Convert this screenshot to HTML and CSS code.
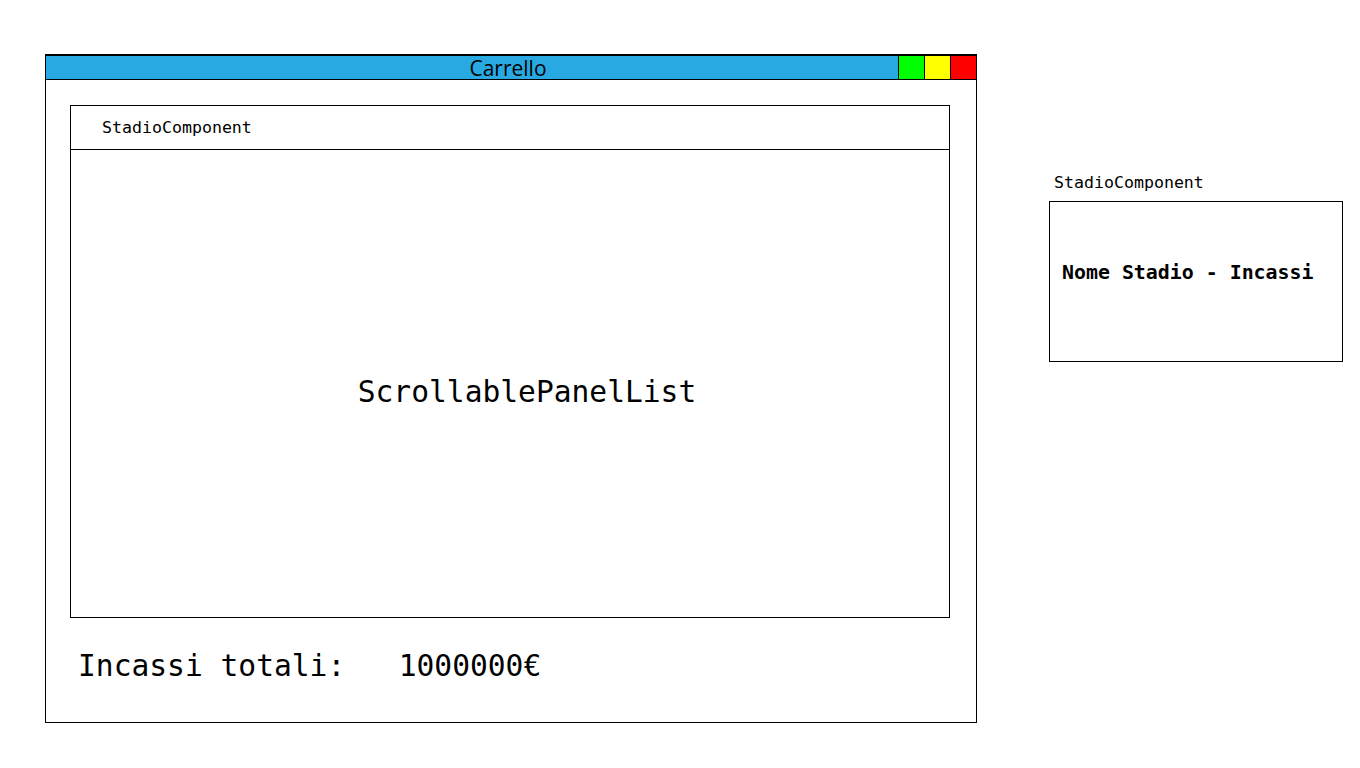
FILE: index.html
```html
<!DOCTYPE html>
<html lang="it">
<head>
<meta charset="utf-8">
<title>Carrello</title>
<link rel="stylesheet" href="styles.css">
</head>
<body>
<div class="page">
  <div class="window">
    <div class="titlebar">
      <span class="title">Carrello</span>
      <div class="controls">
        <span class="btn btn-green"></span>
        <span class="btn btn-yellow"></span>
        <span class="btn btn-red"></span>
      </div>
    </div>
    <div class="content">
      <div class="panel">
        <div class="panel-header">StadioComponent</div>
        <div class="panel-body">ScrollablePanelList</div>
      </div>
      <div class="totals">Incassi totali:   1000000€</div>
    </div>
  </div>
  <div class="side">
    <div class="side-label">StadioComponent</div>
    <div class="side-box">
      <div class="side-text">Nome Stadio - Incassi</div>
    </div>
  </div>
</div>
</body>
</html>
```
FILE: styles.css
```css
* { box-sizing: border-box; }
html, body { margin: 0; padding: 0; background: #ffffff; }
body { font-family: "DejaVu Sans Mono", monospace; color: #000; }

.page {
  display: flex;
  align-items: flex-start;
  padding: 54px 0 0 45px;
}

.window {
  width: 932px;
  height: 669px;
  border: 1px solid #000;
  border-top-width: 2px;
  display: flex;
  flex-direction: column;
}

.titlebar {
  position: relative;
  height: 24px;
  background: #29a9e1;
  border-bottom: 1px solid #000;
  display: flex;
  justify-content: center;
  align-items: center;
}

.title {
  font-family: "Open Sans", sans-serif;
  font-size: 21px;
  line-height: 23px;
  padding-right: 6px;
  margin-top: 2px;
}

.controls {
  position: absolute;
  right: 0;
  top: -2px;
  height: 25px;
  display: flex;
}

.btn {
  width: 26px;
  height: 25px;
  border-left: 1px solid #000;
  border-top: 2px solid #000;
}
.btn-green { background: #00ff00; }
.btn-yellow { background: #ffff00; }
.btn-red { background: #ff0000; }

.content {
  flex: 1;
  padding: 25px 26px 0 24px;
  display: flex;
  flex-direction: column;
}

.panel {
  width: 880px;
  height: 513px;
  border: 1px solid #000;
  display: flex;
  flex-direction: column;
}

.panel-header {
  height: 44px;
  border-bottom: 1px solid #000;
  display: flex;
  align-items: center;
  padding-left: 31px;
  font-size: 16.6px;
}

.panel-body {
  flex: 1;
  display: flex;
  align-items: center;
  justify-content: center;
  padding: 16px 0 0 34px;
  font-size: 29.6px;
}

.totals {
  white-space: pre;
  font-size: 29.6px;
  line-height: 36px;
  margin-top: 30px;
  padding-left: 8px;
}

.side {
  margin-left: 72px;
  margin-top: 119px;
  display: flex;
  flex-direction: column;
}

.side-label {
  font-size: 16.6px;
  line-height: 20px;
  padding-left: 5px;
  margin-bottom: 8px;
}

.side-box {
  width: 294px;
  height: 161px;
  border: 1px solid #000;
  padding: 56px 0 0 12px;
}

.side-text {
  font-size: 19.9px;
  font-weight: bold;
  line-height: 30px;
}
```
